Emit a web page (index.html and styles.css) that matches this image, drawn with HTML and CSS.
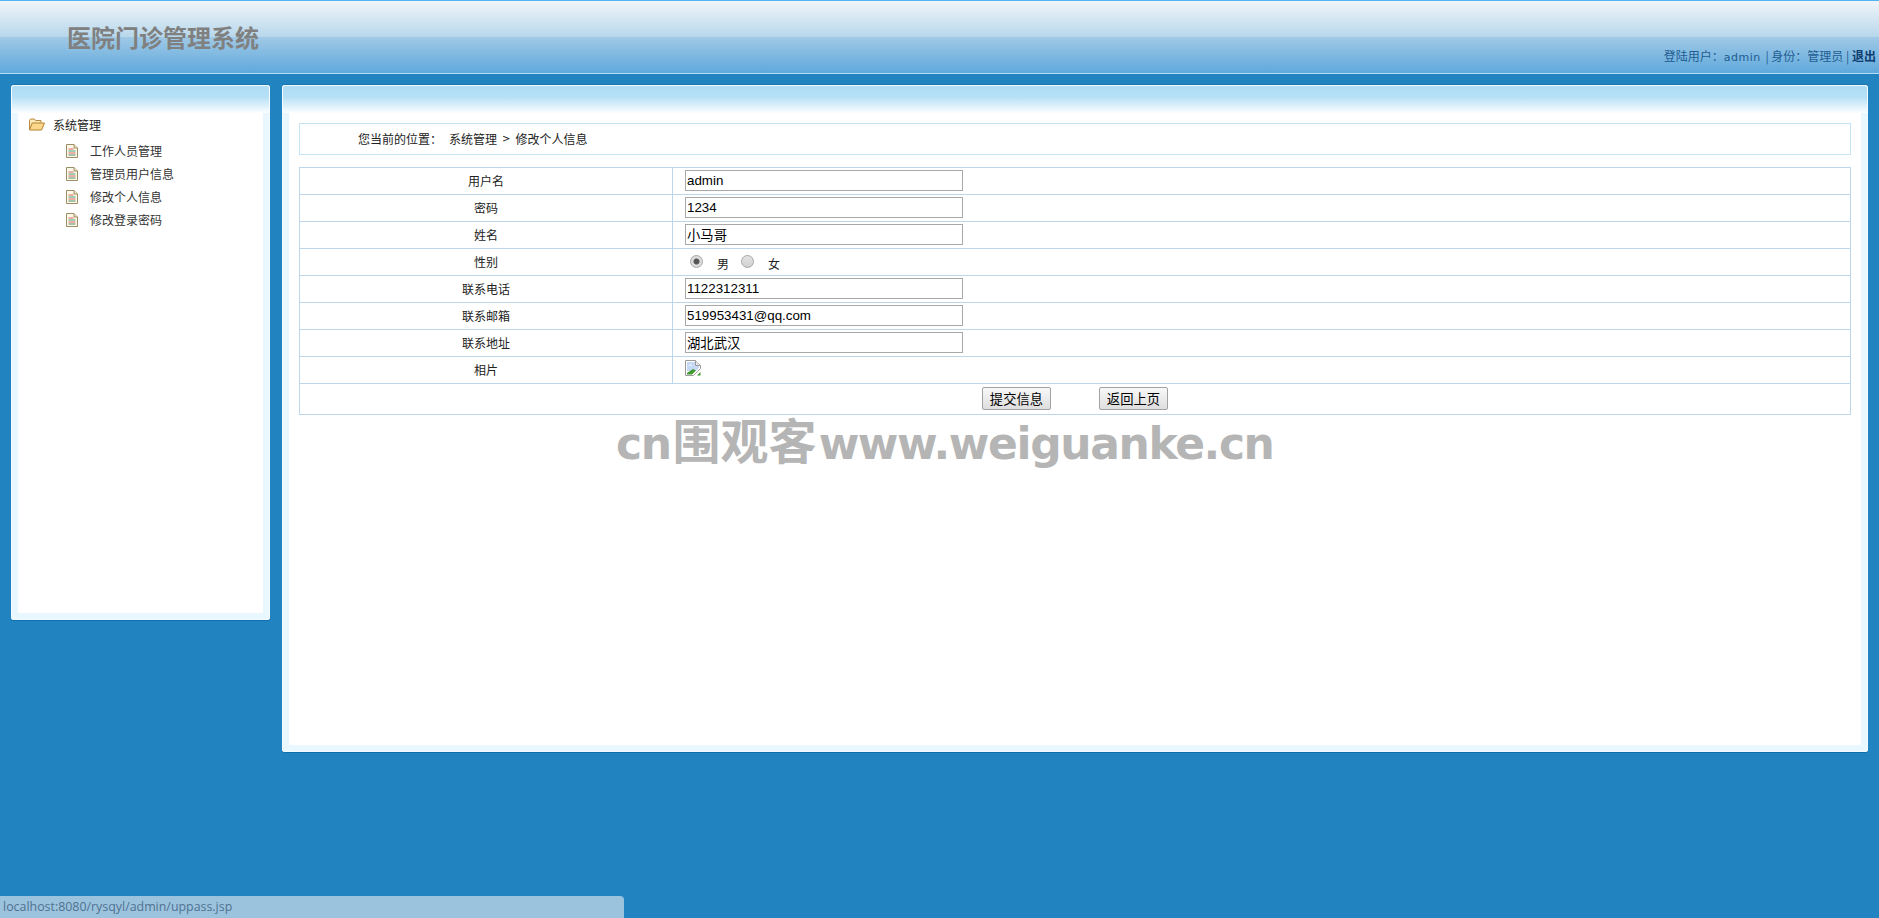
FILE: index.html
```html
<!DOCTYPE html>
<html lang="zh-CN">
<head>
<meta charset="utf-8">
<title>医院门诊管理系统</title>
<link rel="stylesheet" href="styles.css">
</head>
<body>
<header class="top">
  <h1 class="brand">医院门诊管理系统</h1>
  <div class="user">登陆用户：<span class="latin">admin</span> | 身份：管理员 | <a class="logout" href="#">退出</a></div>
</header>
<div class="content">
  <aside class="panel side">
    <div class="panel-body">
      <div class="tree-root">
        <svg class="folder" width="16" height="13" viewBox="0 0 16 13"><path d="M.5 11.5V2.5l1-1.5h4l1 1.5h5.5v2" fill="#fbe7b8" stroke="#b78a3f"/><path d="M.5 11.9 3.2 5h12.3l-2.9 7H.9z" fill="#fbd78c" stroke="#b5822f"/></svg>
        <span>系统管理</span>
      </div>
      <ul class="tree">
        <li><svg class="doc" width="12" height="14" viewBox="0 0 12 14"><use href="#doc"/></svg><a href="#">工作人员管理</a></li>
        <li><svg class="doc" width="12" height="14" viewBox="0 0 12 14"><use href="#doc"/></svg><a href="#">管理员用户信息</a></li>
        <li><svg class="doc" width="12" height="14" viewBox="0 0 12 14"><use href="#doc"/></svg><a href="#">修改个人信息</a></li>
        <li><svg class="doc" width="12" height="14" viewBox="0 0 12 14"><use href="#doc"/></svg><a href="#">修改登录密码</a></li>
      </ul>
    </div>
  </aside>
  <main class="panel main">
    <div class="panel-body main-body">
      <div class="crumb"><span class="crumb-label">您当前的位置：</span><span>系统管理</span><span class="crumb-sep">&gt;</span><span>修改个人信息</span></div>
      <table class="form">
        <tr><td class="lab">用户名</td><td class="val"><input class="txt" type="text" value="admin"></td></tr>
        <tr><td class="lab">密码</td><td class="val"><input class="txt" type="text" value="1234"></td></tr>
        <tr><td class="lab">姓名</td><td class="val"><input class="txt" type="text" value="小马哥"></td></tr>
        <tr><td class="lab">性别</td><td class="val"><div class="radios"><input class="radio" type="radio" name="sex" checked><span class="radio-text">男</span><input class="radio" type="radio" name="sex"><span class="radio-text">女</span></div></td></tr>
        <tr><td class="lab">联系电话</td><td class="val"><input class="txt" type="text" value="1122312311"></td></tr>
        <tr><td class="lab">联系邮箱</td><td class="val"><input class="txt" type="text" value="519953431@qq.com"></td></tr>
        <tr><td class="lab">联系地址</td><td class="val"><input class="txt" type="text" value="湖北武汉"></td></tr>
        <tr><td class="lab">相片</td><td class="val"><svg class="broken" width="16" height="16" viewBox="0 0 16 16"><path d="M.5.5h10l5 5v3l-3 3-2 2-2 2H.5z" fill="#fff" stroke="#9a9a9a"/><path d="M10.5.5v5h5" fill="#e6e6e6" stroke="#9a9a9a"/><path d="M2 2h8v4h4v2l-3 3H2z" fill="#c6d9f4"/><path d="M3.5 5.5c1-1.5 3-1.5 4 0z" fill="#fff"/><path d="M2 14.5v-1.5l6-4 3 1.5-4 4z" fill="#3f9a2e"/><path d="M12 15.5l3.5-3.5v3.5z" fill="#3f9a2e"/></svg></td></tr>
        <tr><td class="actions" colspan="2"><div class="btns"><button class="btn" type="button">提交信息</button><button class="btn" type="button">返回上页</button></div></td></tr>
      </table>
    </div>
  </main>
</div>
<div class="watermark"><span class="wm-a">cn</span><span class="wm-c">围观客</span><span class="wm-a">www.weiguanke.cn</span></div>
<div class="status">localhost:8080/rysqyl/admin/uppass.jsp</div>
<svg class="defs" width="0" height="0"><defs><g id="doc"><path d="M.5.5h7.5l3.5 3.5v9.5h-11z" fill="#fdf9ea" stroke="#9c8d62"/><path d="M8 .5v3.5h3.5" fill="#eee3c4" stroke="#9c8d62"/><path d="M2.5 5h5" stroke="#e0625a"/><path d="M2.5 7h7" stroke="#3aa27c"/><path d="M2.5 9h7" stroke="#e0625a"/><path d="M2.5 11h7" stroke="#4c8a6a"/></g></defs></svg>
</body>
</html>
```
FILE: styles.css
```css
* { box-sizing: border-box; }
html, body { height: 100%; }
body {
  margin: 0;
  background: #2184c1;
  font-family: "Noto Sans CJK SC", "Liberation Sans", sans-serif;
  font-size: 12px;
  color: #333;
  overflow: hidden;
}
a { color: inherit; text-decoration: none; }
.defs { display: block; }

.top {
  height: 74px;
  display: flex;
  justify-content: space-between;
  border-top: 1px solid #50b5f1;
  border-bottom: 1px solid #b6dcf5;
  background: linear-gradient(#f1f5fa 0, #b7d7eb 36px, #a0c9e6 36px, #5fa9dc 72px);
}
.brand {
  margin: 0;
  padding: 18px 0 0 67px;
  font-size: 24px;
  line-height: 36px;
  font-weight: 700;
  color: #808080;
}
.user {
  align-self: flex-end;
  padding: 0 3px 6px 0;
  line-height: 18px;
  color: #1f5c92;
}
.latin { margin-right: 2px; font-family: "DejaVu Sans", sans-serif; font-size: 11px; letter-spacing: .5px; }
.logout { color: #0f3d70; font-weight: 700; }

.content {
  display: flex;
  align-items: flex-start;
  gap: 12px;
  padding: 11px 11px 0;
}
.panel {
  padding: 28px 7px 7px;
  border-radius: 3px;
  background: linear-gradient(#aedcf5 0, #b6e0f6 12px, #fbfeff 28px, #e9f7fe 28px);
  box-shadow: 0 1px 0 #0f6fae, 0 -1px 0 #1a74b0, inset 0 0 0 1px #f3fbff;
}
.side { width: 259px; height: 535px; }
.main { flex: 1; height: 667px; }
.panel-body { height: 100%; background: #fff; }

.tree-root {
  height: 22px;
  display: flex;
  align-items: center;
  padding-left: 11px;
  gap: 8px;
  color: #222;
}
.tree {
  list-style: none;
  margin: 4px 0 0;
  padding: 0 0 0 48px;
}
.tree li {
  height: 23px;
  display: flex;
  align-items: center;
  gap: 12px;
}
.main-body { padding: 10px; }
.crumb {
  height: 32px;
  display: flex;
  align-items: center;
  padding: 0 0 2px 58px;
  border: 1px solid #c6e4f7;
  color: #222;
}
.crumb-label { margin-right: 7px; }
.crumb-sep { margin: 0 5px; font-family: "DejaVu Sans", sans-serif; font-size: 10px; }

.form {
  width: 100%;
  margin-top: 12px;
  border-collapse: collapse;
  table-layout: fixed;
}
.form td {
  border: 1px solid #bdd6eb;
  height: 27px;
  padding: 0;
}
.form td.lab { width: 373px; padding-bottom: 2px; text-align: center; color: #222; }
.form td.val { padding-left: 12px; vertical-align: top; }
.txt {
  display: block;
  width: 278px;
  height: 21px;
  margin-top: 2px;
  padding: 0 1px;
  border: 1px solid #a9a9a9;
  background: #fff;
  color: #000;
  font-family: "Liberation Sans", "Noto Sans CJK SC", sans-serif;
  font-size: 13.33px;
}
.radios { display: flex; align-items: flex-start; height: 26px; padding-left: 5px; }
.radio {
  appearance: none;
  width: 13px;
  height: 13px;
  margin: 6px 0 0;
  border: 1px solid #a8a8a8;
  border-radius: 50%;
  background: linear-gradient(#e2e2e2, #d2d2d2);
}
.radio:checked {
  background: radial-gradient(circle, #555 0, #555 2.5px, #dcdcdc 3.5px);
}
.radio-text { width: 32px; padding: 7px 0 0 14px; line-height: 16px; color: #222; }
.radio-text:nth-of-type(1) { width: 38px; }
.broken { display: block; margin: 3px 0 7px; }
.form td.actions { height: 31px; text-align: center; }
.btns { display: flex; justify-content: center; gap: 48px; padding-bottom: 1px; }
.btn {
  width: 69px;
  height: 23px;
  padding: 0;
  border: 1px solid #a2a2a2;
  border-radius: 2px;
  background: linear-gradient(#f8f8f8, #dedede);
  color: #000;
  font-family: "Noto Sans CJK SC", sans-serif;
  font-size: 13.33px;
  line-height: 20px;
}

.watermark {
  position: absolute;
  left: 616px;
  top: 408px;
  display: flex;
  align-items: baseline;
  color: #b5b5b5;
  white-space: nowrap;
  line-height: 60px;
}
.wm-a { font-family: "DejaVu Sans", sans-serif; font-weight: 700; font-size: 44px; letter-spacing: -1.4px; }
.wm-c { font-family: "Noto Sans CJK SC", sans-serif; font-weight: 700; font-size: 48px; margin: 0 2px; }

.status {
  position: absolute;
  left: 0;
  bottom: 0;
  width: 624px;
  height: 22px;
  padding-left: 3px;
  border-top-right-radius: 4px;
  background: #9cc3de;
  color: #4f7290;
  font-family: "Open Sans", sans-serif;
  font-size: 12.4px;
  line-height: 21px;
}
```
